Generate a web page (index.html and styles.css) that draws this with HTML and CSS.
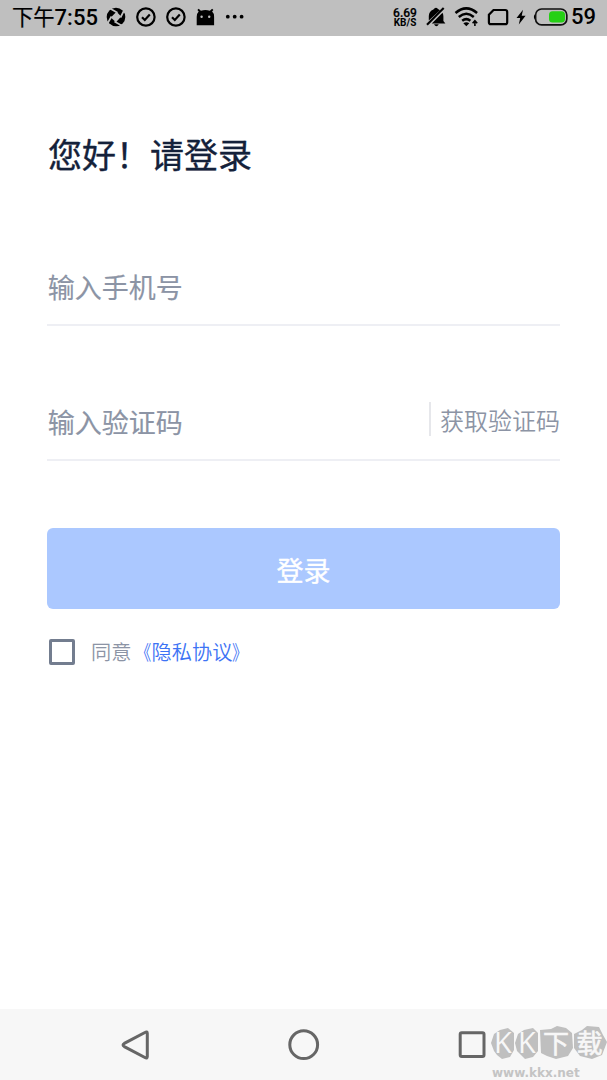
FILE: index.html
```html
<!DOCTYPE html>
<html lang="zh-CN">
<head>
<meta charset="utf-8">
<title>登录</title>
<link rel="stylesheet" href="styles.css">
</head>
<body>
<div class="screen">
  <header class="status">
    <div class="status-left">
      <div class="clock"><span class="clock-cn">下午</span><span>7:55</span></div>
      <svg class="tray" viewBox="0 0 30 36"><circle cx="15" cy="17" r="9.300"/><path d="M15.500 11.800l4.700 4.700-5.200 5.700-5.200-4.700z" fill="#bfbfbf"/><path d="M16.500 12.800L9.500 8.800M19.500 17.500l3.500-7M13.500 21.500l7 4M10.500 16.500l-4 7" fill="none" stroke="#bfbfbf" stroke-width="1.700"/></svg>
      <svg class="tray" viewBox="0 0 30 36"><circle cx="14.900" cy="17" r="8.700" class="line"/><path d="M11 17.200l2.800 2.800 5-5.400" class="line"/></svg>
      <svg class="tray" viewBox="0 0 30 36"><circle cx="14.900" cy="17" r="8.700" class="line"/><path d="M11 17.200l2.800 2.800 5-5.400" class="line"/></svg>
      <svg class="tray" viewBox="0 0 30 36"><path d="M5.700 25.200v-8.200q.2-4 2-5.500l-1.300-1.600 1.300-1.200 2.200 2q4.500-1.300 9 0l2.200-2 1.300 1.200-1.300 1.600q2 1.500 2 5.500v8.200z"/><circle cx="10.600" cy="16.700" r="1.200" fill="#bfbfbf"/><circle cx="18.200" cy="16.700" r="1.200" fill="#bfbfbf"/></svg>
      <svg class="tray" viewBox="0 0 30 36"><circle cx="6.800" cy="16.700" r="1.900"/><circle cx="13.700" cy="16.700" r="1.900"/><circle cx="20.600" cy="16.700" r="1.900"/></svg>
    </div>
    <div class="status-right">
      <div class="speed"><span class="speed-value">6.69</span><span class="speed-unit">KB/S</span></div>
      <svg width="24" height="36" viewBox="0 0 24 36"><path d="M4.800 20.500v-4.500q.2-5 4.600-6.500 2.300-3 4.600-.5l2 1.200z"/><path d="M18.500 12.800q.9 1.500.9 3.500v4.700l2 2.500H7.800z"/><path d="M10 24.200h4.800q-2.400 4-4.800 0z"/><path d="M3 24.700L19.700 8" stroke="#000" stroke-width="2.100"/></svg>
      <svg width="27" height="36" viewBox="0 0 27 36"><path d="M1.500 13q10.800-9.200 21.600 0M4.800 17q7.500-6.500 15 0M8.200 20.800q4.100-3.400 8.200 0" fill="none" stroke="#000" stroke-width="2.500"/><path d="M9.300 23.200q3-1.800 6 0l-3 3z"/><path d="M20.900 26v-5M18.600 23.200l2.300-2.500 2.300 2.500" class="thin"/></svg>
      <svg width="22" height="36" viewBox="0 0 22 36"><path d="M6.500 10h11.700q2 0 2 2v10.200q0 2-2 2H3.900q-2 0-2-2v-7.400z" class="line"/></svg>
      <svg width="12" height="36" viewBox="0 0 12 36"><path d="M8 9.800L1.500 18h3.700l-1.400 6.500 6.800-8.700H6.700z"/></svg>
      <div class="power">
        <svg width="36" height="36" viewBox="0 0 36 36"><rect x="2.600" y="9" width="31.200" height="15.900" rx="6" fill="none" stroke="#111" stroke-width="1.700"/><path d="M2 14.300q-2.200 2.700 0 5.400z"/><rect x="16" y="11.300" width="16" height="11.300" rx="3.600" fill="#25d015"/></svg>
        <span>59</span>
      </div>
    </div>
  </header>

  <main class="login">
    <h1 class="title">您好！请登录</h1>
    <div class="field">输入手机号</div>
    <div class="field field-code"><span>输入验证码</span><span class="get-code">获取验证码</span></div>
    <div class="submit">登录</div>
    <div class="agree"><span class="box"></span><span>同意<span class="policy"><span class="quote quote-open">《</span>隐私协议<span class="quote quote-close">》</span></span></span></div>
  </main>

  <footer class="nav">
    <svg class="nav-icon" viewBox="0 0 34 36"><path d="M26.900 5.500Q29.300 4 29.300 6.500v23q0 2.500-2.400 1L6.300 19.600q-2.500-1.600 0-3.200z" class="nav-line"/></svg>
    <svg class="nav-icon" viewBox="0 0 34 36"><circle cx="16.700" cy="17.700" r="13.900" class="nav-line"/></svg>
    <svg class="nav-icon" viewBox="0 0 34 36"><rect x="5.200" y="5.800" width="23.800" height="23.800" rx="1.500" class="nav-line"/></svg>
    <div class="mark">
      <svg class="mark-art" width="117" height="34" viewBox="0 0 117 34">
        <path class="stone" d="M1 16l3-9 6-4 8-2 6 5v17l-4 7-8 2-5-4-3-4z"/>
        <path class="stone" d="M25 16l3-9 6-4 9-2 5 5v18l-5 6-8 2-4-4-4-4z"/>
        <path class="stone" d="M50 3l11-1 6-3 9 2 6 5 1 15-5 8-12 3-9-3-6-3z"/>
        <path class="stone" d="M84 7l8-4 5-4 12 1 4 8 4 7-5 13-10 4-12-3-6-8z"/>
        <text class="mark-k" x="4" y="26">K</text><text class="mark-k" x="28" y="26">K</text>
        <text class="mark-cn" x="53" y="26">下</text><text class="mark-cn" x="86.500" y="26">载</text>
      </svg>
      <div class="mark-url">www.kkx.net</div>
    </div>
  </footer>
</div>
</body>
</html>
```
FILE: styles.css
```css
* { box-sizing: border-box; }
body { margin: 0; font-family: Roboto, "Noto Sans CJK SC", sans-serif; background: #fff; }
.screen { width: 607px; height: 1080px; display: flex; flex-direction: column; overflow: hidden; }
svg { display: block; flex: none; }

.status { height: 36px; background: #bfbfbf; display: flex; justify-content: space-between; padding: 0 11px 0 12px; color: #000; }
.status-left { display: flex; align-items: center; }
.clock { width: 89px; display: flex; align-items: center; font-size: 22px; font-weight: 500; line-height: 34px; height: 36px; white-space: nowrap; }
.clock-cn { font-size: 21.3px; font-weight: 400; -webkit-text-stroke: .2px #000; }
.tray { width: 30px; height: 36px; }
.line { fill: none; stroke: #000; stroke-width: 2.2; }
.thin { fill: none; stroke: #000; stroke-width: 1.6; }
.status-right { display: flex; align-items: center; gap: 6px; }
.speed { width: 26px; display: flex; flex-direction: column; align-items: center; font-weight: 700; line-height: 9px; }
.speed-value { font-size: 12px; font-weight: 500; -webkit-text-stroke: .2px #000; }
.speed-unit { font-size: 10px; }
.power { display: flex; align-items: center; gap: 2px; font-size: 22px; font-weight: 500; line-height: 32px; }
.power span { width: 25px; height: 34px; }

.login { flex: 1; padding: 93px 47px 0 47px; display: flex; flex-direction: column; font-family: "Noto Sans CJK SC", sans-serif; }
.title { margin: 0; padding-left: 1px; height: 50px; font-size: 34px; line-height: 50px; font-weight: 400; -webkit-text-stroke: .35px #14213a; color: #14213a; }
.field { margin-top: 70px; height: 77px; padding: 18px 0 0 0; border-bottom: 2px solid #eeeff4; font-size: 27px; line-height: 40px; font-weight: 400; -webkit-text-stroke: .15px #8c94a5; color: #8c94a5; text-indent: .7px; }
.field-code { margin-top: 58px; display: flex; justify-content: space-between; align-items: flex-start; }
.get-code { height: 34px; padding-left: 9px; border-left: 2px solid #e6e7eb; font-size: 24px; line-height: 36px; font-weight: 350; -webkit-text-stroke: 0; text-indent: 0; }
.submit { margin-top: 67px; height: 81px; border-radius: 6px; background: #abc8ff; color: #fff; font-size: 27px; line-height: 83px; font-weight: 400; -webkit-text-stroke: .35px #fff; text-align: center; }
.agree { margin-top: 29px; padding-left: 2px; display: flex; align-items: center; gap: 16px; font-size: 20.2px; line-height: 28px; font-weight: 350; color: #8c94a5; }
.box { width: 26px; height: 26px; border: 3px solid #737d8f; border-radius: 2px; }
.policy { color: #3d73f5; }
.quote { display: inline-block; transform: scaleX(.78); }
.quote-open { transform-origin: right center; }
.quote-close { transform-origin: left center; }

.nav { position: relative; height: 71px; padding: 0 118px; background: #f7f7f7; display: flex; align-items: center; justify-content: space-between; }
.nav-icon { width: 34px; height: 36px; }
.nav-line { fill: none; stroke: #666; stroke-width: 3; }
.mark { position: absolute; left: 490px; top: 18px; width: 117px; }
.mark-art { overflow: visible; }
.stone { fill: #bfbfbf; }
.mark-k { font: 500 29px "Open Sans", sans-serif; fill: #f7f7f7; }
.mark-cn { font: 400 26px "Noto Sans CJK SC", sans-serif; fill: #f7f7f7; stroke: #f7f7f7; stroke-width: .6px; }
.mark-url { padding-left: 2px; font: 700 12px/14px "DejaVu Sans", sans-serif; margin-top: 5px; color: #c4c4c4; }
```
